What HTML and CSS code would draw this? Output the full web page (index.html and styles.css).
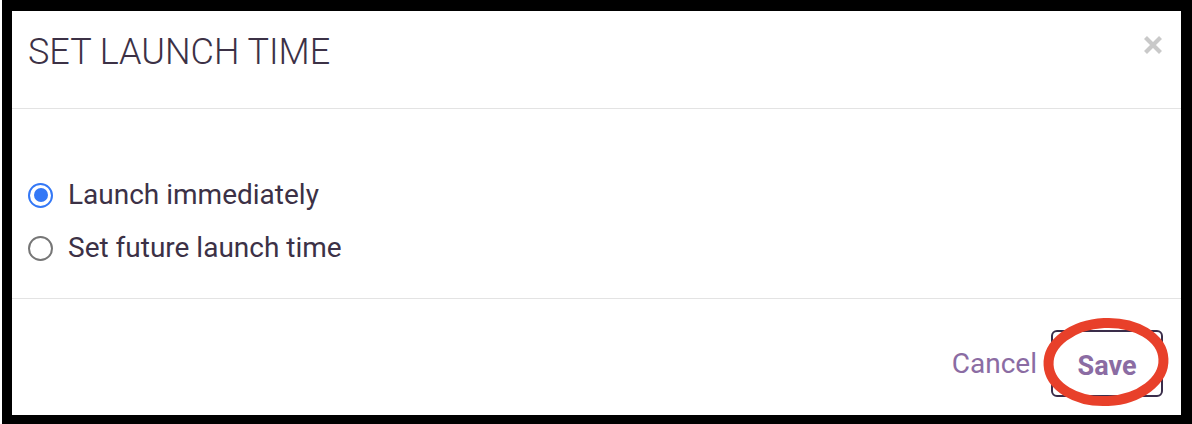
FILE: index.html
```html
<!DOCTYPE html>
<html>
<head>
<meta charset="utf-8">
<link rel="stylesheet" href="styles.css">
</head>
<body>
<div class="frame">
  <div class="modal">
    <div class="header">
      <h1 class="title">SET LAUNCH TIME</h1>
      <button class="close" aria-label="Close">
        <svg width="20" height="20" viewBox="0 0 20 20"><path d="M2.5 2.5 L17.5 17.5 M17.5 2.5 L2.5 17.5" stroke="#c9c9c9" stroke-width="4.2" stroke-linecap="butt"/></svg>
      </button>
    </div>
    <div class="body">
      <label class="option">
        <span class="radio checked"><span class="dot"></span></span>
        <span class="label">Launch immediately</span>
      </label>
      <label class="option">
        <span class="radio"></span>
        <span class="label">Set future launch time</span>
      </label>
    </div>
    <div class="footer">
      <button class="btn cancel">Cancel</button>
      <div class="save-wrap">
        <button class="btn save">Save</button>
        <svg class="mark" width="132" height="96" viewBox="0 0 132 96"><ellipse cx="66" cy="48" rx="57.5" ry="39" fill="none" stroke="#e8402a" stroke-width="10" transform="rotate(-3 66 48)"/></svg>
      </div>
    </div>
  </div>
</div>
</body>
</html>
```
FILE: styles.css
```css
* { box-sizing: border-box; }
html, body { margin: 0; padding: 0; background: #fff; }
body { font-family: Roboto, "Noto Sans", sans-serif; }
.frame {
  margin-left: 2px;
  width: 1190px;
  height: 424px;
  border-style: solid;
  border-color: #000;
  border-width: 11px 11px 9px 10px;
}
.modal {
  height: 100%;
  background: #fff;
  display: flex;
  flex-direction: column;
}
.header {
  height: 98px;
  border-bottom: 1px solid #e3e3e3;
  display: flex;
  align-items: flex-start;
  justify-content: space-between;
  padding: 0 18px 0 16px;
}
.title {
  margin: 20px 0 0 0;
  font-weight: 300;
  font-size: 36px;
  line-height: 42px;
  color: #3c3146;
  letter-spacing: 0;
}
.close {
  margin-top: 24px;
  padding: 0;
  border: 0;
  background: none;
  width: 20px;
  height: 20px;
  display: flex;
}
.body {
  height: 190px;
  border-bottom: 1px solid #e3e3e3;
  display: flex;
  flex-direction: column;
  justify-content: center;
  gap: 28px;
  padding: 36px 16px 0;
}
.option {
  display: flex;
  align-items: center;
  gap: 15px;
  height: 25px;
}
.radio {
  width: 25px;
  height: 25px;
  border-radius: 50%;
  border: 2px solid #767676;
  display: flex;
  align-items: center;
  justify-content: center;
  flex: none;
}
.radio.checked { border: 2.5px solid #3478f6; }
.dot {
  width: 14px;
  height: 14px;
  border-radius: 50%;
  background: #3478f6;
}
.label {
  font-size: 28px;
  color: #3c3146;
  line-height: 32px;
}
.footer {
  flex: 1;
  display: flex;
  justify-content: flex-end;
  align-items: flex-start;
  padding: 31px 18px 0 0;
  gap: 14px;
}
.btn {
  font-family: Roboto, "Noto Sans", sans-serif;
  font-size: 28px;
  color: #8b6ca3;
  background: none;
  border: 0;
  padding: 0;
  cursor: pointer;
}
.cancel {
  height: 67px;
  padding-top: 0;
}
.save-wrap { position: relative; }
.save {
  width: 112px;
  height: 67px;
  border: 2px solid #3a2d4a;
  border-radius: 6px;
  font-weight: 700;
  font-size: 27px;
  padding-top: 4px;
}
.mark {
  position: absolute;
  left: -11px;
  top: -16px;
  pointer-events: none;
}
```
